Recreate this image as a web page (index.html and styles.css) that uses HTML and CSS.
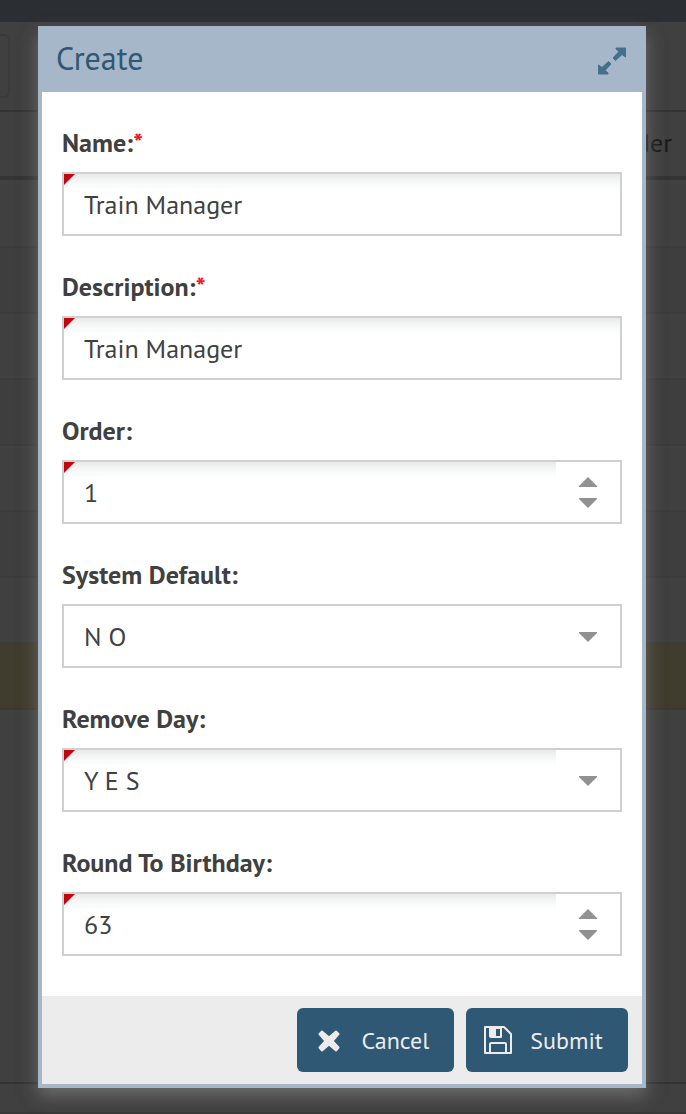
FILE: index.html
```html
<!DOCTYPE html>
<html lang="en">
<head>
<meta charset="utf-8">
<title>Create</title>
<link rel="stylesheet" href="styles.css">
</head>
<body>
<div class="page">
  <div class="topbar"></div>
  <div class="toolbar"><div class="tool"></div></div>
  <div class="grid-head">Order</div>
  <div class="grid">
    <div class="row"></div>
    <div class="row alt"></div>
    <div class="row"></div>
    <div class="row alt"></div>
    <div class="row"></div>
    <div class="row alt"></div>
    <div class="row"></div>
    <div class="row selected"></div>
  </div>
  <div class="page-foot"></div>
</div>

<form class="dialog" role="dialog" aria-labelledby="dialog-title">
  <header class="dialog-head">
    <h1 class="title" id="dialog-title">Create</h1>
    <button class="expand" type="button" aria-label="Maximize">
      <svg width="28" height="28" viewBox="0 0 28 28" fill="#466f8c" stroke="#466f8c" stroke-width="1" stroke-linejoin="round">
        <path d="M18 1H27.500V10L24 7.500L17.500 13.500L15 11L21 4.500L18 2Z"/>
        <path d="M10 27H0.500V18L4 20.500L10.500 14.500L13 17L7 23.500L10 26Z"/>
      </svg>
    </button>
  </header>

  <div class="fields">
    <div class="field">
      <label class="label" for="name">Name:<span class="required">*</span></label>
      <div class="control changed"><input class="input" id="name" type="text" value="Train Manager"></div>
    </div>
    <div class="field">
      <label class="label" for="description">Description:<span class="required">*</span></label>
      <div class="control changed"><input class="input" id="description" type="text" value="Train Manager"></div>
    </div>
    <div class="field">
      <label class="label" for="order">Order:</label>
      <div class="control changed">
        <input class="input" id="order" type="number" value="1">
        <div class="trigger">
          <button class="step" type="button" aria-label="Increase order"><svg width="18" height="10" viewBox="0 0 18 10"><path d="M9 0L18 9V10H0V9Z" fill="#919191"/></svg></button>
          <button class="step" type="button" aria-label="Decrease order"><svg width="18" height="10" viewBox="0 0 18 10"><path d="M9 10L18 1V0H0V1Z" fill="#919191"/></svg></button>
        </div>
      </div>
    </div>
    <div class="field">
      <label class="label" for="system-default">System Default:</label>
      <div class="control">
        <select class="input select" id="system-default"><option>Y E S</option><option selected>N O</option></select>
        <svg class="arrow" width="18" height="10" viewBox="0 0 18 10"><path d="M9 10L18 1V0H0V1Z" fill="#919191"/></svg>
      </div>
    </div>
    <div class="field">
      <label class="label" for="remove-day">Remove Day:</label>
      <div class="control changed">
        <select class="input select" id="remove-day"><option selected>Y E S</option><option>N O</option></select>
        <svg class="arrow" width="18" height="10" viewBox="0 0 18 10"><path d="M9 10L18 1V0H0V1Z" fill="#919191"/></svg>
      </div>
    </div>
    <div class="field">
      <label class="label" for="round">Round To Birthday:</label>
      <div class="control changed">
        <input class="input" id="round" type="number" value="63">
        <div class="trigger">
          <button class="step" type="button" aria-label="Increase birthday"><svg width="18" height="10" viewBox="0 0 18 10"><path d="M9 0L18 9V10H0V9Z" fill="#919191"/></svg></button>
          <button class="step" type="button" aria-label="Decrease birthday"><svg width="18" height="10" viewBox="0 0 18 10"><path d="M9 10L18 1V0H0V1Z" fill="#919191"/></svg></button>
        </div>
      </div>
    </div>
  </div>

  <footer class="actions">
    <button class="button" type="button">
      <svg class="icon" width="28" height="28" viewBox="0 0 28 28"><path d="M7 5.500L4.500 8L10.500 15L4.500 21.500L7 24.500L14 18.500L21 24.500L23.500 21.500L17.500 15L23.500 8L21 5.500L14 11.500Z" fill="#ececec" stroke="#ececec" stroke-width="2" stroke-linejoin="round"/></svg>
      <span>Cancel</span>
    </button>
    <button class="button" type="button">
      <svg class="icon" width="28" height="28" viewBox="0 0 28 28" fill="none" stroke="#ececec" stroke-width="2" stroke-linejoin="round">
        <path d="M1 1H20L27 8V27H1Z"/>
        <path d="M6 27V18Q6 17 7 17H21Q22 17 22 18V27"/>
        <path fill="#ececec" fill-rule="evenodd" stroke="none" d="M5 1H18V11Q18 12 17 12H7Q5 12 5 10ZM12 3V10H16V3Z"/>
      </svg>
      <span>Submit</span>
    </button>
  </footer>
</form>
</body>
</html>
```
FILE: styles.css
```css
* { box-sizing: border-box; }

body {
  margin: 0;
  min-height: 100vh;
  overflow: hidden;
  background: #404040;
  color: #404040;
  font-family: "PT Sans", "Noto Sans", sans-serif;
  font-size: 26px;
}

.page { display: flex; flex-direction: column; height: 100vh; }
.topbar { height: 22px; background: #2b2e33; }
.toolbar { height: 90px; padding-top: 12px; border-bottom: 2px solid #333333; }
.tool {
  width: 10px;
  height: 64px;
  border: 2px solid #3a3a3a;
  border-left: 0;
  border-radius: 0 6px 6px 0;
}
.grid-head {
  height: 68px;
  padding-right: 14px;
  border-bottom: 4px solid #343434;
  color: #191919;
  line-height: 62px;
  text-align: right;
}
.grid { flex: 1; padding-top: 2px; border-bottom: 2px solid #333333; }
.row { height: 66px; border-bottom: 2px solid #3b3b3b; }
.row.alt { background: #3e3e3e; }
.row.selected { background: #403c2e; border-color: #3b382d; }
.page-foot { height: 30px; border-bottom: 2px solid #393939; }

.dialog {
  position: absolute;
  top: 26px;
  left: 38px;
  right: 40px;
  border: 4px solid #a6b7ca;
  border-top: 0;
  background: #ffffff;
  box-shadow: 0 8px 16px rgba(136, 136, 136, 0.6);
}
.dialog-head {
  display: flex;
  align-items: center;
  justify-content: space-between;
  height: 66px;
  padding: 0 16px 0 14px;
  background: #a6b7ca;
}
.title { margin: 0; color: #2e5873; font-size: 32px; font-weight: 400; line-height: 64px; height: 66px; }
.expand { display: flex; padding: 4px 0 0; border: 0; background: none; }

.fields { display: flex; flex-direction: column; gap: 28px; padding: 28px 20px 40px; }
.label {
  display: block;
  height: 52px;
  line-height: 46px;
  font-weight: 700;
}
.required { color: #ff0a1e; }
.control {
  position: relative;
  display: flex;
  height: 64px;
  border: 2px solid #d0d0d0;
  background: #ffffff;
}
.input {
  flex: 1;
  min-width: 0;
  margin: 0;
  padding: 0 20px;
  border: 0;
  border-radius: 0;
  outline: 0;
  background: transparent;
  color: #404040;
  font: inherit;
  appearance: none;
}
.input[type="number"] { appearance: textfield; }
.input::-webkit-inner-spin-button { appearance: none; margin: 0; }
.changed .input {
  background: linear-gradient(#e6eaeb, #f3f5f5 6px, #ffffff 16px);
}
.changed .select { background-size: calc(100% - 64px) 100%; background-repeat: no-repeat; }
.changed::before {
  content: "";
  position: absolute;
  top: 0;
  left: 0;
  border-top: 11px solid #c40510;
  border-right: 11px solid transparent;
}
.trigger {
  display: flex;
  flex-direction: column;
  align-items: center;
  justify-content: center;
  gap: 11px;
  width: 64px;
}
.step { display: flex; padding: 0; border: 0; background: none; }
.arrow { position: absolute; top: 26px; right: 23px; pointer-events: none; }

.actions {
  display: flex;
  justify-content: flex-end;
  gap: 12px;
  padding: 12px 14px;
  background: #ececec;
}
.button {
  display: flex;
  align-items: center;
  gap: 18px;
  height: 64px;
  padding: 0 25px 0 18px;
  border: 0;
  border-radius: 6px;
  background: #2e5873;
  color: #ececec;
  font: inherit;
  font-size: 24px;
}
```
